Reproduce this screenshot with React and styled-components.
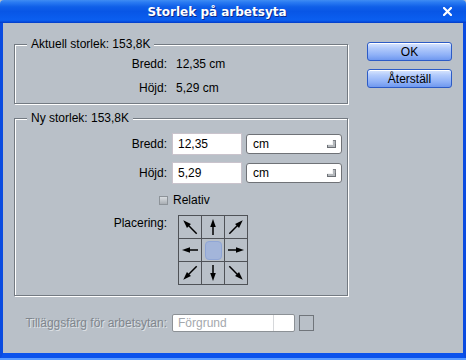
import React from 'react';
import styled, { createGlobalStyle } from 'styled-components';

const Global = createGlobalStyle`
  html, body { margin: 0; padding: 0; background: #b9c0c8; }
  body {
    width: 466px; height: 360px; overflow: hidden;
    font-family: "Liberation Sans", Arial, sans-serif;
    font-size: 12px; color: #000;
  }
  * { box-sizing: border-box; }
`;

const Window = styled.div`
  width: 466px;
  height: 360px;
  display: flex;
  flex-direction: column;
`;

const TitleBar = styled.div`
  height: 23px;
  flex: none;
  display: flex;
  align-items: center;
  border-radius: 4px 4px 0 0;
  background: linear-gradient(
    #3f8cf3 0%, #2a7bf2 10%, #0f5fe8 30%, #0856e6 50%,
    #0a5ced 75%, #0b5ff0 88%, #0548d8 96%, #0339c4 100%
  );
`;

const Title = styled.div`
  flex: 1;
  text-align: center;
  color: #fff;
  font-weight: bold;
  font-size: 12px;
  font-family: "DejaVu Sans", "Liberation Sans", sans-serif;
  text-shadow: 1px 1px 0 #0a2a8c;
`;

const Close = styled.div`
  width: 26px;
  margin-right: 6px;
  display: flex;
  justify-content: center;
  align-items: center;
`;

const Frame = styled.div`
  flex: 1;
  display: flex;
  border-left: 3px solid #0a4be0;
  border-right: 3px solid #0a4be0;
  border-bottom: 7px solid #0b52ec;
  background: #b9c0c8;
  position: relative;
`;

const BottomEdge = styled.div`
  position: absolute;
  left: -3px; right: -3px; bottom: -7px; height: 2px;
  background: #5c9cff;
`;

const Content = styled.div`
  flex: 1;
  display: flex;
  padding: 19px 0 0 11px;
`;

const LeftCol = styled.div`
  width: 334px;
  padding-top: 2px;
  display: flex;
  flex-direction: column;
`;

const RightCol = styled.div`
  margin-left: 19px;
  display: flex;
  flex-direction: column;
  gap: 8px;
`;

const Group = styled.div`
  position: relative;
  border: 1px solid #737a82;
  box-shadow: inset 1px 1px 0 #fff, 1px 1px 0 #fff;
  padding: ${p => p.$pt}px 0 ${p => p.$pb}px 0;
  margin-top: ${p => p.$mt || 0}px;
  display: flex;
  flex-direction: column;
`;

const Caption = styled.span`
  position: absolute;
  top: -8px;
  left: 12px;
  padding: 0 4px;
  line-height: 14px;
  background: #b9c0c8;
`;

const Row = styled.div`
  display: flex;
  align-items: center;
  height: ${p => p.$h}px;
  margin-top: ${p => p.$mt || 0}px;
`;

const TopRow = styled.div`
  display: flex;
  align-items: flex-start;
  margin-top: ${p => p.$mt || 0}px;
`;

const Label = styled.span`
  width: ${p => p.$w || 152}px;
  text-align: right;
  flex: none;
  line-height: 14px;
  color: ${p => (p.$disabled ? '#80868d' : '#000')};
  text-shadow: ${p => (p.$disabled ? '1px 1px 0 #dfe3e7' : 'none')};
  padding-top: ${p => p.$pt || 0}px;
`;

const Value = styled.span`
  margin-left: 9px;
`;

const Input = styled.div`
  margin-left: 5px;
  width: 70px;
  height: 22px;
  background: #fff;
  border: 1px solid #c9c3cc;
  display: flex;
  align-items: center;
  padding-left: 5px;
`;

const Select = styled.div`
  margin-left: 4px;
  width: 96px;
  height: 20px;
  background: #fff;
  border: 1px solid #6f7277;
  border-radius: 3px;
  display: flex;
  align-items: center;
  justify-content: space-between;
  padding: 0 5px 0 6px;
`;

const Check = styled.span`
  width: 9px;
  height: 9px;
  margin-left: 144px;
  border: 1px solid #8d9399;
  background: linear-gradient(#d9dde1, #a9aeb4);
  flex: none;
`;

const CheckText = styled.span`
  margin-left: 5px;
`;

const Grid = styled.div`
  margin-left: 11px;
  display: grid;
  grid-template-columns: repeat(3, 22px);
  grid-template-rows: repeat(3, 22px);
  gap: 1px;
  padding: 1px;
  background: #4f5257;
`;

const Cell = styled.div`
  background: #b9c0c8;
  display: flex;
  align-items: center;
  justify-content: center;
`;

const Anchor = styled.div`
  width: 17px;
  height: 19px;
  border-radius: 4px;
  background: #a3b5da;
  border: 1px solid #90a6d6;
`;

const ArrowSvg = styled.svg`
  transform: rotate(${p => p.$deg}deg);
`;

const Combo = styled.div`
  margin-left: 5px;
  width: 123px;
  height: 18px;
  background: #fff;
  border: 1px solid #8c9196;
  border-radius: 2px;
  display: flex;
`;

const ComboText = styled.span`
  flex: 1;
  color: #a4a8ad;
  padding-left: 5px;
  line-height: 16px;
  border-right: 1px solid #d6d8db;
`;

const ComboEnd = styled.span`
  width: 20px;
`;

const Swatch = styled.div`
  margin-left: 4px;
  width: 15px;
  height: 16px;
  border: 1px solid #70757b;
`;

const Button = styled.button`
  width: 85px;
  height: 19px;
  padding: 0;
  font-family: "Liberation Sans", Arial, sans-serif;
  font-size: 12px;
  color: #000;
  border: 1px solid #2c5bc6;
  border-radius: 3px;
  background: linear-gradient(#dbe7fe 0%, #b3cbfb 30%, #8fb1f7 70%, #6f98ef 100%);
  box-shadow: inset 0 1px 0 #fff;
`;

const Arrow = ({ deg }) => {
  const diag = deg % 90 !== 0;
  const top = diag ? 0.5 : 2;
  const bottom = diag ? 19.5 : 18;
  return (
    <ArrowSvg $deg={deg} width="20" height="20" viewBox="0 0 20 20">
      <line x1="10" y1={bottom} x2="10" y2={top + 6} stroke="#000" strokeWidth="1.5" />
      <polygon points={`10,${top} 7.2,${top + 8} 12.8,${top + 8}`} fill="#000" />
    </ArrowSvg>
  );
};

const DropGlyph = () => (
  <svg width="9" height="8" viewBox="0 0 9 8">
    <rect x="5" y="0" width="4" height="8" fill="#7d8186" />
    <rect x="0" y="4" width="9" height="4" fill="#6c7075" />
    <rect x="5" y="0" width="1" height="5" fill="#f2f3f4" />
    <rect x="0" y="4" width="6" height="1" fill="#f2f3f4" />
    <rect x="1" y="5" width="7" height="2" fill="#b4b8bc" />
    <rect x="6" y="1" width="2" height="5" fill="#b4b8bc" />
  </svg>
);

const cells = [-45, 0, 45, -90, null, 90, -135, 180, 135];

export default function App() {
  return (
    <>
      <Global />
      <Window>
        <TitleBar>
          <Title>Storlek på arbetsyta</Title>
          <Close>
            <svg width="9" height="9" viewBox="0 0 9 9">
              <path d="M1 1 L8 8 M8 1 L1 8" stroke="#fff" strokeWidth="2.2" strokeLinecap="square" />
            </svg>
          </Close>
        </TitleBar>
        <Frame>
          <Content>
            <LeftCol>
              <Group $pt={7} $pb={3}>
                <Caption>Aktuell storlek: 153,8K</Caption>
                <Row $h={24}>
                  <Label>Bredd:</Label>
                  <Value>12,35 cm</Value>
                </Row>
                <Row $h={24}>
                  <Label>Höjd:</Label>
                  <Value>5,29 cm</Value>
                </Row>
              </Group>

              <Group $pt={14} $pb={10} $mt={14}>
                <Caption>Ny storlek: 153,8K</Caption>
                <Row $h={22}>
                  <Label>Bredd:</Label>
                  <Input>12,35</Input>
                  <Select>cm<DropGlyph /></Select>
                </Row>
                <Row $h={22} $mt={7}>
                  <Label>Höjd:</Label>
                  <Input>5,29</Input>
                  <Select>cm<DropGlyph /></Select>
                </Row>
                <Row $h={14} $mt={9}>
                  <Check />
                  <CheckText>Relativ</CheckText>
                </Row>
                <TopRow $mt={8}>
                  <Label $pt={1}>Placering:</Label>
                  <Grid>
                    {cells.map((d, i) => (
                      <Cell key={i}>{d === null ? <Anchor /> : <Arrow deg={d} />}</Cell>
                    ))}
                  </Grid>
                </TopRow>
              </Group>

              <Row $h={18} $mt={18}>
                <Label $w={153} $disabled>Tilläggsfärg för arbetsytan:</Label>
                <Combo>
                  <ComboText>Förgrund</ComboText>
                  <ComboEnd />
                </Combo>
                <Swatch />
              </Row>
            </LeftCol>
            <RightCol>
              <Button>OK</Button>
              <Button>Återställ</Button>
            </RightCol>
          </Content>
          <BottomEdge />
        </Frame>
      </Window>
    </>
  );
}
